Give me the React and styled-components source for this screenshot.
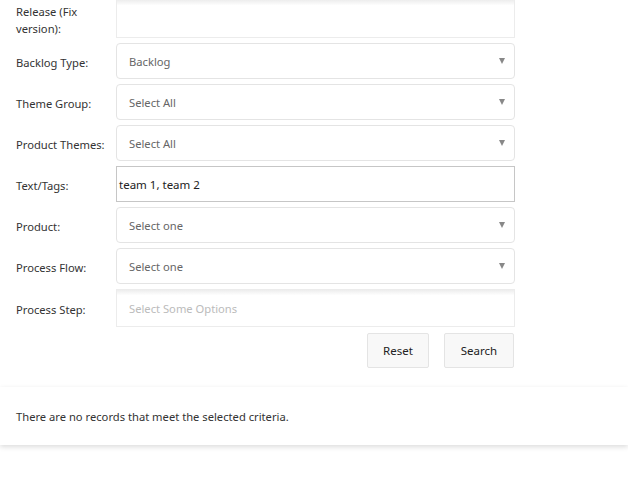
import React from "react";
import styled, { createGlobalStyle } from "styled-components";

const Global = createGlobalStyle`
  html, body { margin: 0; padding: 0; background: #fff; }
  body { font-family: "Noto Sans", "Open Sans", Arial, sans-serif; font-size: 11.2px; color: #333; overflow: hidden; }
`;

const Page = styled.div`
  width: 628px;
  height: 490px;
  display: flex;
  flex-direction: column;
`;

const Form = styled.div`
  margin-top: -1px;
  padding-left: 16px;
  display: grid;
  grid-template-columns: 100px 399px;
  row-gap: 5px;
  align-items: center;
`;

const Label = styled.label`
  font-size: 11.2px;
  color: #333;
  line-height: 17px;
  padding-top: 2px;
  white-space: ${(p) => (p.$wrap ? "normal" : "nowrap")};
  padding-right: ${(p) => (p.$wrap ? "20px" : "0")};
`;

const Select = styled.div`
  height: 36px;
  box-sizing: border-box;
  border: 1px solid #e4e4e4;
  border-radius: 4px;
  background: #fff;
  display: flex;
  align-items: center;
  justify-content: space-between;
  padding: 0 9px 0 12px;
  color: #666;
  font-size: 11.2px;
`;

const Arrow = styled.span`
  width: 0;
  height: 0;
  border-left: 3.5px solid transparent;
  border-right: 3.5px solid transparent;
  border-top: 6px solid #888;
`;

const Multi = styled.div`
  height: ${(p) => p.$h}px;
  box-sizing: border-box;
  border: 1px solid #ececec;
  background: linear-gradient(#eee 1%, #fff 15%);
  display: flex;
  align-items: center;
  padding: 0 12px;
  color: #bbb;
  font-size: 11.2px;
`;

const TextInput = styled.div`
  height: 36px;
  box-sizing: border-box;
  border: 1px solid #c6c6c6;
  background: #fff;
  display: flex;
  align-items: center;
  padding: 0 2px;
  color: #222;
  font-size: 11.5px;
`;

const Actions = styled.div`
  grid-column: 2;
  display: flex;
  justify-content: flex-end;
  gap: 15px;
  padding-right: 1px;
  margin-top: 1px;
`;

const Button = styled.button`
  height: 35px;
  width: ${(p) => p.$w}px;
  padding: 0;
  background: #f8f8f8;
  border: 1px solid #e4e4e4;
  border-radius: 2px;
  font-family: inherit;
  font-size: 11.5px;
  color: #222;
`;

const Card = styled.div`
  margin-top: 19px;
  height: 58px;
  background: #fff;
  box-shadow: 0 2px 5px rgba(0, 0, 0, 0.14);
  display: flex;
  align-items: center;
  padding-left: 16px;
  font-size: 11.2px;
  color: #333;
`;

const selects = [
  ["Backlog Type:", "Backlog"],
  ["Theme Group:", "Select All"],
  ["Product Themes:", "Select All"],
];

export default function App() {
  return (
    <>
      <Global />
      <Page>
        <Form>
          <Label $wrap>Release (Fix version):</Label>
          <Multi $h={39} />
          {selects.map(([l, v]) => (
            <React.Fragment key={l}>
              <Label>{l}</Label>
              <Select>
                <span>{v}</span>
                <Arrow />
              </Select>
            </React.Fragment>
          ))}
          <Label>Text/Tags:</Label>
          <TextInput>team 1, team 2</TextInput>
          <Label>Product:</Label>
          <Select>
            <span>Select one</span>
            <Arrow />
          </Select>
          <Label>Process Flow:</Label>
          <Select>
            <span>Select one</span>
            <Arrow />
          </Select>
          <Label>Process Step:</Label>
          <Multi $h={38}>Select Some Options</Multi>
          <Actions>
            <Button $w={62}>Reset</Button>
            <Button $w={70}>Search</Button>
          </Actions>
        </Form>
        <Card>There are no records that meet the selected criteria.</Card>
      </Page>
    </>
  );
}
